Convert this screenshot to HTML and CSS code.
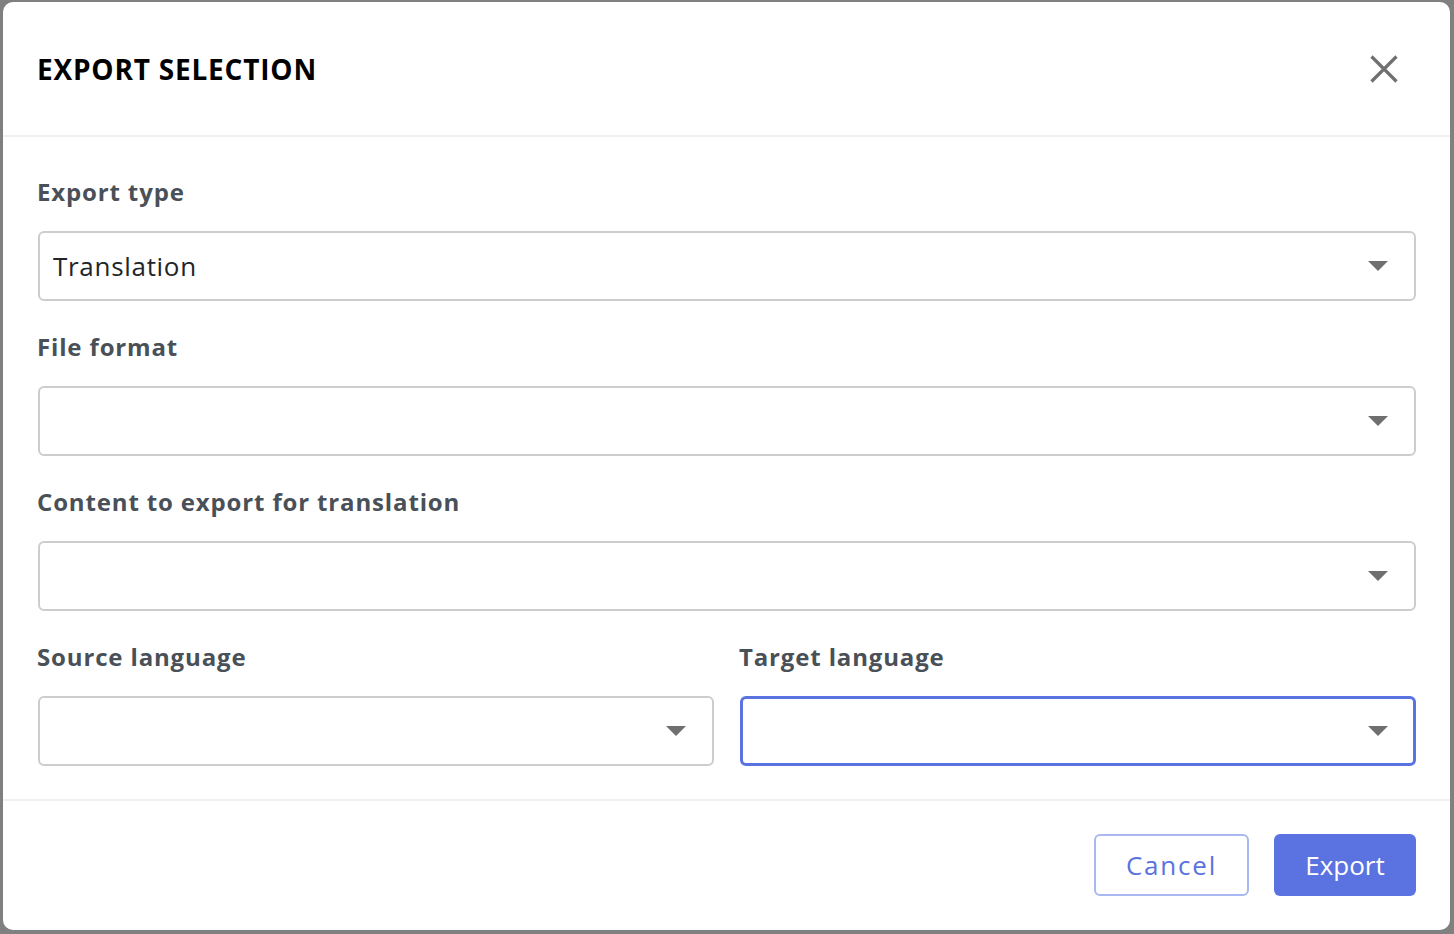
FILE: index.html
```html
<!DOCTYPE html>
<html lang="en">
<head>
<meta charset="utf-8">
<title>Export selection</title>
<link rel="stylesheet" href="styles.css">
</head>
<body>
<div class="backdrop">
  <div class="dialog" role="dialog" aria-labelledby="dlg-title">
    <header class="dialog-header">
      <h1 id="dlg-title" class="dialog-title">EXPORT SELECTION</h1>
      <button class="close-btn" aria-label="Close">
        <svg width="28" height="28" viewBox="0 0 28 28"><path d="M1.5 1.5 L26.5 26.5 M26.5 1.5 L1.5 26.5" stroke="#707070" stroke-width="3.2" fill="none"/></svg>
      </button>
    </header>
    <div class="dialog-body">
      <div class="field">
        <label class="field-label">Export type</label>
        <div class="select"><span class="select-value">Translation</span><span class="caret"></span></div>
      </div>
      <div class="field">
        <label class="field-label">File format</label>
        <div class="select"><span class="select-value"></span><span class="caret"></span></div>
      </div>
      <div class="field">
        <label class="field-label">Content to export for translation</label>
        <div class="select"><span class="select-value"></span><span class="caret"></span></div>
      </div>
      <div class="field-row">
        <div class="field">
          <label class="field-label">Source language</label>
          <div class="select"><span class="select-value"></span><span class="caret"></span></div>
        </div>
        <div class="field">
          <label class="field-label">Target language</label>
          <div class="select focused"><span class="select-value"></span><span class="caret"></span></div>
        </div>
      </div>
    </div>
    <footer class="dialog-footer">
      <button class="btn btn-outline">Cancel</button>
      <button class="btn btn-primary">Export</button>
    </footer>
  </div>
</div>
</body>
</html>
```
FILE: styles.css
```css
html, body {
  margin: 0;
  padding: 0;
  height: 100%;
}
body {
  background: #808080;
  font-family: "Open Sans", "DejaVu Sans", sans-serif;
  overflow: hidden;
}
.backdrop {
  padding: 2px 4px 4px 3px;
  height: 934px;
  box-sizing: border-box;
}
.dialog {
  background: #fff;
  border-radius: 10px;
  height: 928px;
  display: flex;
  flex-direction: column;
  box-sizing: border-box;
}
.dialog-header {
  height: 135px;
  box-sizing: border-box;
  border-bottom: 2px solid #f1f1f4;
  display: flex;
  align-items: center;
  justify-content: space-between;
  padding: 0 52px 0 34px;
}
.dialog-title {
  margin: 0;
  font-size: 28px;
  font-weight: 700;
  color: #000;
  line-height: 36px;
  letter-spacing: 0.8px;
}
.close-btn {
  border: 0;
  background: none;
  padding: 0;
  width: 28px;
  height: 28px;
  display: flex;
  cursor: pointer;
}
.dialog-body {
  padding: 37px 34px 33px 35px;
  display: flex;
  flex-direction: column;
  gap: 28px;
  border-bottom: 2px solid #f1f1f4;
}
.field {
  display: flex;
  flex-direction: column;
  gap: 21px;
  flex: 1;
  min-width: 0;
}
.field-row {
  display: flex;
  gap: 26px;
}
.field-label {
  font-size: 24px;
  font-weight: 700;
  line-height: 36px;
  color: #495057;
  letter-spacing: 0.85px;
  margin-left: -1px;
}
.select {
  height: 70px;
  box-sizing: border-box;
  border: 2px solid #cdcdcd;
  border-radius: 6px;
  display: flex;
  align-items: center;
  padding: 0 26px 0 14px;
  justify-content: space-between;
}
.select.focused {
  border: 3px solid #5a73e0;
  padding: 0 25px 0 13px;
}
.select-value {
  font-size: 26px;
  color: #212529;
  letter-spacing: 0.7px;
  margin-left: -1px;
}
.caret {
  width: 0;
  height: 0;
  border-left: 10px solid transparent;
  border-right: 10px solid transparent;
  border-top: 10px solid #6f6f6f;
}
.dialog-footer {
  flex: 1;
  display: flex;
  justify-content: flex-end;
  align-items: flex-start;
  padding: 33px 34px 0 0;
  gap: 25px;
}
.btn {
  height: 62px;
  box-sizing: border-box;
  border-radius: 6px;
  font-family: inherit;
  font-size: 26px;
  cursor: pointer;
}
.btn-outline {
  width: 155px;
  background: #fff;
  border: 2px solid #a9b8f2;
  color: #5a73e0;
  letter-spacing: 1.8px;
}
.btn-primary {
  width: 142px;
  background: #5a73e0;
  border: 0;
  color: #fff;
}
```
